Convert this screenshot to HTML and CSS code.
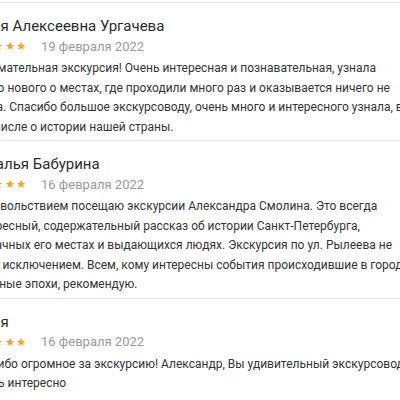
FILE: index.html
```html
<!DOCTYPE html>
<html lang="ru">
<head>
<meta charset="utf-8">
<title>Отзывы</title>
<link rel="stylesheet" href="styles.css">
</head>
<body>
<section class="reviews">
  <article class="review">
    <div class="name">Юлия Алексеевна Ургачева</div>
    <div class="meta">
      <span class="stars">
        <svg class="star" viewBox="0 0 24 24"><path d="M12 2l2.9 6.9 7.1.6-5.4 4.7 1.6 7L12 17.5 5.8 21.2l1.6-7L2 9.5l7.1-.6z"/></svg>
        <svg class="star" viewBox="0 0 24 24"><path d="M12 2l2.9 6.9 7.1.6-5.4 4.7 1.6 7L12 17.5 5.8 21.2l1.6-7L2 9.5l7.1-.6z"/></svg>
        <svg class="star" viewBox="0 0 24 24"><path d="M12 2l2.9 6.9 7.1.6-5.4 4.7 1.6 7L12 17.5 5.8 21.2l1.6-7L2 9.5l7.1-.6z"/></svg>
        <svg class="star" viewBox="0 0 24 24"><path d="M12 2l2.9 6.9 7.1.6-5.4 4.7 1.6 7L12 17.5 5.8 21.2l1.6-7L2 9.5l7.1-.6z"/></svg>
        <svg class="star" viewBox="0 0 24 24"><path d="M12 2l2.9 6.9 7.1.6-5.4 4.7 1.6 7L12 17.5 5.8 21.2l1.6-7L2 9.5l7.1-.6z"/></svg>
      </span>
      <span class="date">19 февраля 2022</span>
    </div>
    <p class="text">Занимательная экскурсия! Очень интересная и познавательная, узнала<br>много нового о местах, где проходили много раз и оказывается ничего не<br>знала. Спасибо большое экскурсоводу, очень много и интересного узнала, в<br>том числе о истории нашей страны.</p>
  </article>
  <article class="review">
    <div class="name">Наталья Бабурина</div>
    <div class="meta">
      <span class="stars">
        <svg class="star" viewBox="0 0 24 24"><path d="M12 2l2.9 6.9 7.1.6-5.4 4.7 1.6 7L12 17.5 5.8 21.2l1.6-7L2 9.5l7.1-.6z"/></svg>
        <svg class="star" viewBox="0 0 24 24"><path d="M12 2l2.9 6.9 7.1.6-5.4 4.7 1.6 7L12 17.5 5.8 21.2l1.6-7L2 9.5l7.1-.6z"/></svg>
        <svg class="star" viewBox="0 0 24 24"><path d="M12 2l2.9 6.9 7.1.6-5.4 4.7 1.6 7L12 17.5 5.8 21.2l1.6-7L2 9.5l7.1-.6z"/></svg>
        <svg class="star" viewBox="0 0 24 24"><path d="M12 2l2.9 6.9 7.1.6-5.4 4.7 1.6 7L12 17.5 5.8 21.2l1.6-7L2 9.5l7.1-.6z"/></svg>
        <svg class="star" viewBox="0 0 24 24"><path d="M12 2l2.9 6.9 7.1.6-5.4 4.7 1.6 7L12 17.5 5.8 21.2l1.6-7L2 9.5l7.1-.6z"/></svg>
      </span>
      <span class="date">16 февраля 2022</span>
    </div>
    <p class="text">С удовольствием посещаю экскурсии Александра Смолина. Это всегда<br>интересный, содержательный рассказ об истории Санкт-Петербурга,<br>о мрачных его местах и выдающихся людях. Экскурсия по ул. Рылеева не<br>была исключением. Всем, кому интересны события происходившие в городе<br>в разные эпохи, рекомендую.</p>
  </article>
  <article class="review">
    <div class="name">Юлия</div>
    <div class="meta">
      <span class="stars">
        <svg class="star" viewBox="0 0 24 24"><path d="M12 2l2.9 6.9 7.1.6-5.4 4.7 1.6 7L12 17.5 5.8 21.2l1.6-7L2 9.5l7.1-.6z"/></svg>
        <svg class="star" viewBox="0 0 24 24"><path d="M12 2l2.9 6.9 7.1.6-5.4 4.7 1.6 7L12 17.5 5.8 21.2l1.6-7L2 9.5l7.1-.6z"/></svg>
        <svg class="star" viewBox="0 0 24 24"><path d="M12 2l2.9 6.9 7.1.6-5.4 4.7 1.6 7L12 17.5 5.8 21.2l1.6-7L2 9.5l7.1-.6z"/></svg>
        <svg class="star" viewBox="0 0 24 24"><path d="M12 2l2.9 6.9 7.1.6-5.4 4.7 1.6 7L12 17.5 5.8 21.2l1.6-7L2 9.5l7.1-.6z"/></svg>
        <svg class="star" viewBox="0 0 24 24"><path d="M12 2l2.9 6.9 7.1.6-5.4 4.7 1.6 7L12 17.5 5.8 21.2l1.6-7L2 9.5l7.1-.6z"/></svg>
      </span>
      <span class="date">16 февраля 2022</span>
    </div>
    <p class="text">Спасибо огромное за экскурсию! Александр, Вы удивительный экскурсовод!<br>Очень интересно</p>
  </article>
</section>
</body>
</html>
```

FILE: styles.css
```css
html, body {
  margin: 0;
  padding: 0;
  background: #fff;
  overflow: hidden;
}

body {
  font-family: Roboto, "Noto Sans", sans-serif;
  color: #333;
}

.reviews {
  margin-left: -30px;
  width: 480px;
  padding-top: 2px;
}

.review {
  border-top: 1px solid #e3e3e3;
  padding: 13px 0 3px;
}

.name {
  font-size: 15px;
  line-height: 20px;
  color: #2b2b2b;
}

.meta {
  display: flex;
  align-items: center;
  gap: 15px;
  height: 20px;
}

.stars {
  display: flex;
  gap: 1.5px;
}

.star {
  width: 10px;
  height: 10px;
  fill: #f5a623;
}

.date {
  font-size: 13px;
  color: #999;
}

.text {
  margin: 3px 0 0;
  font-size: 12px;
  line-height: 19.5px;
  color: #333;
  white-space: nowrap;
}
```
